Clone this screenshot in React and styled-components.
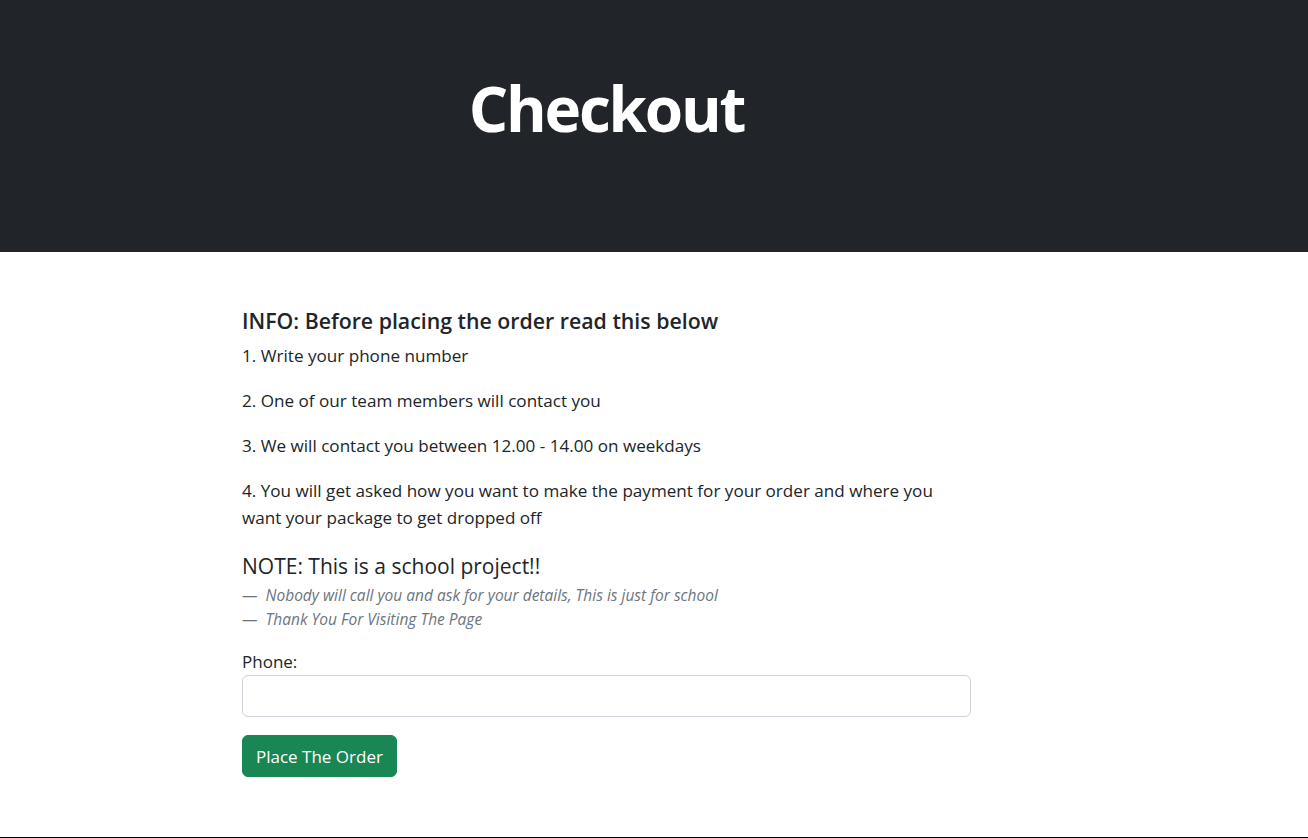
import React from "react";
import styled, { createGlobalStyle } from "styled-components";

const GlobalStyle = createGlobalStyle`
  * { box-sizing: border-box; }
  body {
    margin: 0;
    font-family: "Open Sans", "Noto Sans", sans-serif;
    color: #212529;
    background: #fff;
  }
`;

const steps = [
  "1. Write your phone number",
  "2. One of our team members will contact you",
  "3. We will contact you between 12.00 - 14.00 on weekdays",
  "4. You will get asked how you want to make the payment for your order and where you want your package to get dropped off",
];

const notes = [
  "Nobody will call you and ask for your details, This is just for school",
  "Thank You For Visiting The Page",
];

export default function App() {
  return (
    <Page>
      <GlobalStyle />
      <Header>
        <Column>
          <Title>Checkout</Title>
        </Column>
      </Header>
      <Main>
        <Column>
          <InfoTitle>INFO: Before placing the order read this below</InfoTitle>
          {steps.map((step) => (
            <Step key={step}>{step}</Step>
          ))}
          <Quote>
            <QuoteText>NOTE: This is a school project!!</QuoteText>
            {notes.map((note) => (
              <QuoteFooter key={note}>{note}</QuoteFooter>
            ))}
          </Quote>
          <Label htmlFor="phone">Phone:</Label>
          <Input id="phone" type="tel" />
          <Button type="button">Place The Order</Button>
        </Column>
      </Main>
      <BottomLine />
    </Page>
  );
}

// Styled Components
const Page = styled.div`
  min-height: 838px;
  display: flex;
  flex-direction: column;
`;

const Header = styled.header`
  height: 252px;
  background-color: #212529;
  padding-top: 71px;
`;

const Column = styled.div`
  width: 729px;
  margin-left: 242px;
`;

const Title = styled.h1`
  margin: 0;
  text-align: center;
  color: #fff;
  font-size: 62px;
  font-weight: 700;
  line-height: 1.2;
  letter-spacing: -2.2px;
`;

const Main = styled.main`
  flex: 1;
  padding-top: 55px;
`;

const InfoTitle = styled.h5`
  margin: 0 0 8px;
  font-size: 21.3px;
  font-weight: 600;
  line-height: 27px;
`;

const Step = styled.p`
  margin: 0 0 18px;
  font-size: 17.1px;
  line-height: 27px;
`;

const Quote = styled.blockquote`
  margin: 0 0 17px;
`;

const QuoteText = styled.p`
  margin: 0;
  font-size: 21px;
  line-height: 34px;
`;

const QuoteFooter = styled.div`
  font-size: 15.5px;
  line-height: 24px;
  font-style: italic;
  color: #6c757d;
  &::before {
    content: "\\2014\\00A0\\00A0";
    font-style: normal;
  }
`;

const Label = styled.label`
  display: block;
  font-size: 17px;
  line-height: 27px;
`;

const Input = styled.input`
  display: block;
  width: 100%;
  height: 42px;
  padding: 6px 13px;
  font-size: 17px;
  font-family: inherit;
  color: #212529;
  border: 1px solid #ced4da;
  border-radius: 6px;
  outline: none;
  margin-bottom: 18px;
`;

const Button = styled.button`
  height: 42px;
  padding: 0 13px;
  font-family: inherit;
  font-size: 17px;
  color: #fff;
  background-color: #198754;
  border: 1px solid #198754;
  border-radius: 6px;
  cursor: pointer;
`;

const BottomLine = styled.div`
  margin-top: auto;
  height: 1px;
  background-color: #000;
`;
